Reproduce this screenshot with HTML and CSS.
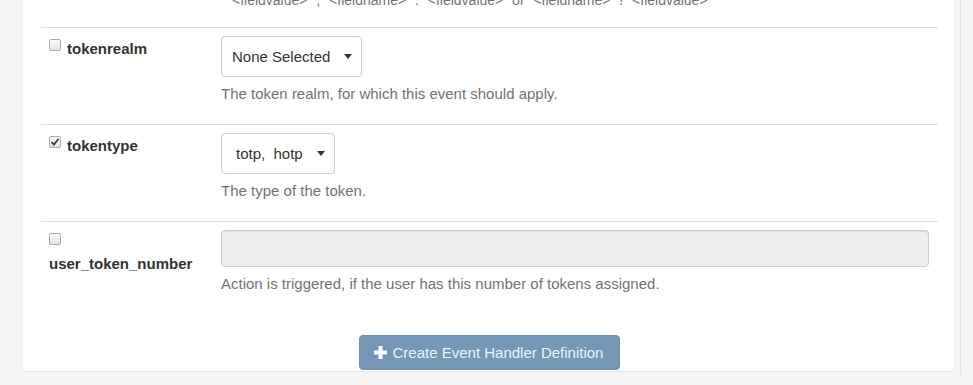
FILE: index.html
```html
<!DOCTYPE html>
<html lang="en">
<head>
  <meta charset="UTF-8">
  <meta name="viewport" content="width=device-width, initial-scale=1.0">
  <title>Event Handler</title>
  <link rel="stylesheet" href="styles.css">
</head>
<body>
  <div class="page">
    <div class="panel">
      <!-- tail of the previous field, scrolled out of view -->
      <div class="field field-tail">
        <div class="field-label"></div>
        <div class="field-control">
          <p class="help">"&lt;fieldvalue&gt;" , "&lt;fieldname&gt;" : "&lt;fieldvalue&gt;" or "&lt;fieldname&gt;" ! "&lt;fieldvalue&gt;"</p>
        </div>
      </div>

      <div class="field">
        <div class="field-label">
          <label><span class="check"></span>tokenrealm</label>
        </div>
        <div class="field-control">
          <button class="select-btn">None Selected<span class="caret"></span></button>
          <p class="help">The token realm, for which this event should apply.</p>
        </div>
      </div>

      <div class="field">
        <div class="field-label">
          <label><span class="check checked"><svg width="10" height="10" viewBox="0 0 10 10"><path d="M1.5 5.2 L4 7.6 L8.6 1.8" fill="none" stroke="#444" stroke-width="1.8"/></svg></span>tokentype</label>
        </div>
        <div class="field-control">
          <button class="select-btn select-multi">totp,&nbsp; hotp<span class="caret"></span></button>
          <p class="help">The type of the token.</p>
        </div>
      </div>

      <div class="field">
        <div class="field-label">
          <label><span class="check"></span> user_token_number</label>
        </div>
        <div class="field-control">
          <input type="text" class="text-input" disabled>
          <p class="help">Action is triggered, if the user has this number of tokens assigned.</p>
        </div>
      </div>

      <div class="actions">
        <button class="btn-create">
          <svg width="13" height="13" viewBox="0 0 13 13"><path d="M4.5 0 H8.5 V4.5 H13 V8.5 H8.5 V13 H4.5 V8.5 H0 V4.5 H4.5 Z" fill="#fff"/></svg>
          Create Event Handler Definition
        </button>
      </div>
    </div>
  </div>
</body>
</html>
```

FILE: styles.css
```css
body {
  margin: 0;
  background-color: #f4f4f4;
  font-family: "Liberation Sans", Arial, sans-serif;
  font-size: 15px;
  line-height: 21px;
  color: #333;
  overflow: hidden;
}

.page {
  width: 961px;
  height: 385px;
  box-sizing: border-box;
  padding: 0 6px 0 23px;
  border-right: 1px solid #e4e4e4;
}

.panel {
  margin-top: -10px;
  padding: 0 16px 1px 18px;
  background-color: #fff;
  border-radius: 0 0 4px 4px;
  box-shadow: 0 1px 1px rgba(0,0,0,0.06);
}

.field {
  display: flex;
  border-top: 1px solid #ddd;
}

.field-tail {
  border-top: none;
  padding-bottom: 16px;
}

.field-label {
  width: 180px;
  flex: none;
  box-sizing: border-box;
  padding: 10px 20px 0 8px;
  font-weight: bold;
}

.field-control {
  flex: 1;
  padding: 8px 9px 20px 0;
}

.field-tail .field-control {
  padding: 0 0 0 6px;
}

.check {
  display: inline-block;
  width: 10px;
  height: 10px;
  margin-right: 6px;
  border: 1px solid #a9a9a9;
  border-radius: 2px;
  background: linear-gradient(#fcfcfc, #e4e4e4);
  vertical-align: 3px;
  overflow: hidden;
  position: relative;
}

.check svg {
  position: absolute;
  left: 0;
  top: 0;
}

.select-btn {
  display: inline-flex;
  align-items: center;
  height: 41px;
  padding: 0 9px 0 10px;
  border: 1px solid #ccc;
  border-radius: 4px;
  background-color: #fff;
  font-family: inherit;
  font-size: 15px;
  color: #333;
}

.select-multi {
  padding-left: 14px;
  padding-right: 9px;
}

.caret {
  display: inline-block;
  margin-left: 14px;
  border-top: 5px solid #333;
  border-left: 4.5px solid transparent;
  border-right: 4.5px solid transparent;
}

.text-input {
  display: block;
  width: 100%;
  height: 37px;
  box-sizing: border-box;
  border: 1px solid #ccc;
  border-radius: 4px;
  background-color: #eee;
  box-shadow: inset 0 1px 1px rgba(0,0,0,0.075);
}

.help {
  margin: 6px 0 0;
  color: #737373;
}

.field-tail .help {
  margin: 0;
  font-size: 14px;
}

.actions {
  margin-top: 21px;
  text-align: center;
}

.btn-create {
  display: inline-flex;
  align-items: center;
  gap: 6px;
  height: 35px;
  padding: 0 16px 0 14px;
  border: 1px solid #6b90ae;
  border-radius: 4px;
  background-color: #7397b5;
  color: #eef3f7;
  font-family: inherit;
  font-size: 15px;
}
```
